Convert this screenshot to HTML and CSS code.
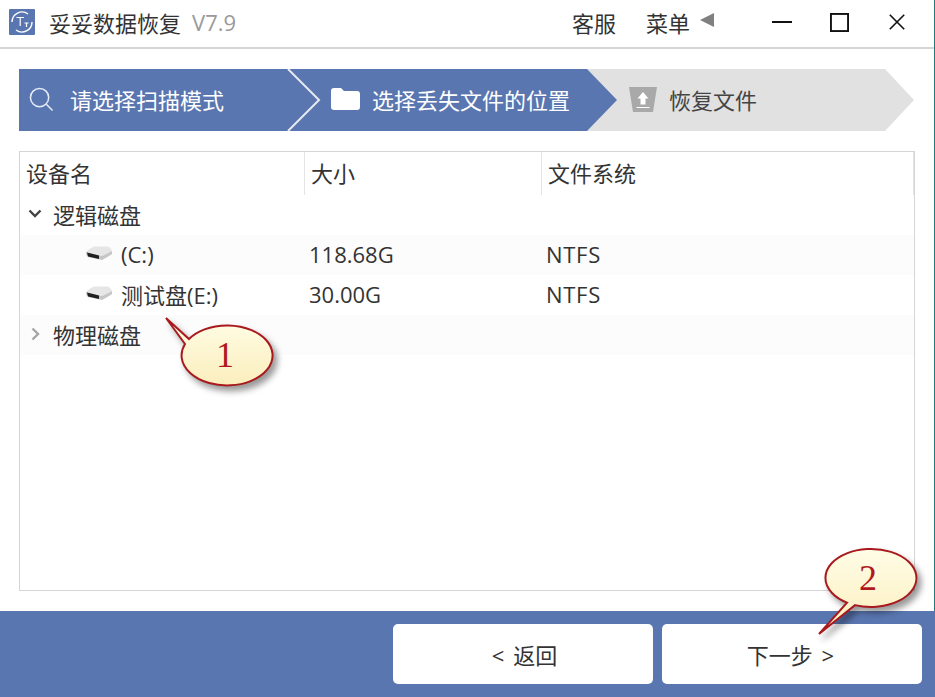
FILE: index.html
```html
<!DOCTYPE html>
<html lang="zh-CN">
<head>
    <meta charset="UTF-8">
    <title>妥妥数据恢复</title>
    <link rel="stylesheet" href="styles.css">
</head>
<body>
    <div class="window">
        <div class="titlebar">
            <svg class="app-logo" viewBox="0 0 26 26">
                <rect width="26" height="26" rx="1" fill="#5a76b0"/>
                <path d="M3 13 A10 10 0 0 1 19 5" fill="none" stroke="#fff" stroke-width="1.4"/>
                <path d="M23 13 A10 10 0 0 1 7 21" fill="none" stroke="#fff" stroke-width="1.4"/>
                <path d="M7.5 8.5 H15 M11.2 8.5 V17 M15.5 14 H19.5 M17.5 14 V18" fill="none" stroke="#fff" stroke-width="1.2"/>
            </svg>
            <span class="app-name">妥妥数据恢复</span>
            <span class="app-version">V7.9</span>
            <div class="title-actions">
                <span class="title-link">客服</span>
                <span class="title-link menu-link">菜单</span>
                <span class="menu-arrow"></span>
            </div>
            <div class="window-controls">
                <svg viewBox="0 0 20 20" class="control control-min"><path d="M0 10 H20" stroke="#111" stroke-width="2"/></svg>
                <svg viewBox="0 0 20 20" class="control control-max"><rect x="1" y="1" width="18" height="18" fill="none" stroke="#111" stroke-width="2"/></svg>
                <svg viewBox="0 0 20 20" class="control control-close"><path d="M2 2 L18 18 M18 2 L2 18" stroke="#111" stroke-width="1.8"/></svg>
            </div>
        </div>

        <div class="content">
            <div class="steps">
                <div class="step step-one">
                    <svg class="step-icon search-icon" viewBox="0 0 26 26">
                        <circle cx="11" cy="11" r="9.5" fill="none" stroke="#e4eaf5" stroke-width="1.6"/>
                        <path d="M18 18 L24.5 24.5" stroke="#e4eaf5" stroke-width="1.6"/>
                    </svg>
                    <span>请选择扫描模式</span>
                </div>
                <div class="step step-two">
                    <svg class="step-icon folder-icon" viewBox="0 0 29 22">
                        <path d="M0 3 Q0 0 3 0 H10 L13 3 H26 Q29 3 29 6 V19 Q29 22 26 22 H3 Q0 22 0 19 Z" fill="#fff"/>
                    </svg>
                    <span>选择丢失文件的位置</span>
                </div>
                <div class="step step-three">
                    <svg class="step-icon upload-icon" viewBox="0 0 28 25">
                        <path d="M0 0 H28 L24 25 H4 Z" fill="#a9a9a9"/>
                        <path d="M14 5 L19.5 11.5 H16.5 V17.5 H11.5 V11.5 H8.5 Z" fill="#fff"/>
                        <path d="M7.5 20.5 H20.5" stroke="#fff" stroke-width="1.2"/>
                    </svg>
                    <span>恢复文件</span>
                </div>
                <svg class="step-divider" viewBox="0 0 34 62"><path d="M1 0 L32 31 L1 62" fill="none" stroke="#e6eaf3" stroke-width="2"/></svg>
            </div>

            <div class="table">
                <div class="table-head">
                    <div class="col-name">设备名</div>
                    <div class="col-size">大小</div>
                    <div class="col-fs">文件系统</div>
                </div>
                <div class="row">
                    <div class="col-name group-cell">
                        <svg class="caret" viewBox="0 0 14 9"><path d="M1.5 1.5 L7 7 L12.5 1.5" fill="none" stroke="#444" stroke-width="2.4"/></svg>
                        逻辑磁盘
                    </div>
                </div>
                <div class="row row-shade">
                    <div class="col-name disk-cell">
                        <svg class="drive" viewBox="0 0 28 15">
                            <path d="M1 6 Q5 2 9 0.5 H23 Q26 1.5 27 5 L17 10 Z" fill="#e6e6e6"/>
                            <path d="M1 6 L17 10 L27 5 V8 Q22 11.5 17 14 L3 11 Q1 9.5 1 6 Z" fill="#c6c6c6"/>
                            <path d="M2 6.5 L14 9.5 V13 L3 10.5 Z" fill="#1f1f1f"/>
                        </svg>
                        (C:)
                    </div>
                    <div class="col-size">118.68G</div>
                    <div class="col-fs">NTFS</div>
                </div>
                <div class="row">
                    <div class="col-name disk-cell">
                        <svg class="drive" viewBox="0 0 28 15">
                            <path d="M1 6 Q5 2 9 0.5 H23 Q26 1.5 27 5 L17 10 Z" fill="#e6e6e6"/>
                            <path d="M1 6 L17 10 L27 5 V8 Q22 11.5 17 14 L3 11 Q1 9.5 1 6 Z" fill="#c6c6c6"/>
                            <path d="M2 6.5 L14 9.5 V13 L3 10.5 Z" fill="#1f1f1f"/>
                        </svg>
                        测试盘(E:)
                    </div>
                    <div class="col-size">30.00G</div>
                    <div class="col-fs">NTFS</div>
                </div>
                <div class="row row-shade">
                    <div class="col-name group-cell">
                        <svg class="caret caret-closed" viewBox="0 0 9 14"><path d="M1.5 1.5 L7 7 L1.5 12.5" fill="none" stroke="#a5a5a5" stroke-width="2.4"/></svg>
                        物理磁盘
                    </div>
                </div>
            </div>
        </div>

        <div class="footer">
            <button class="footer-btn back-btn">&lt; 返回</button>
            <button class="footer-btn next-btn">下一步 &gt;</button>
        </div>

        <div class="callout callout-one">
            <svg viewBox="0 0 125 85" width="125" height="85">
                <defs>
                    <linearGradient id="cream-a" x1="0" y1="0" x2="0" y2="1">
                        <stop offset="0" stop-color="#fffde6"/>
                        <stop offset="1" stop-color="#fbeebd"/>
                    </linearGradient>
                </defs>
                <path d="M6 6 L29 27 A45.5 30 0 1 1 25 32 Z" fill="url(#cream-a)" stroke="#a81a1e" stroke-width="2"/>
            </svg>
            <span class="callout-num">1</span>
        </div>
        <div class="callout callout-two">
            <svg viewBox="0 0 118 100" width="118" height="100">
                <defs>
                    <linearGradient id="cream-b" x1="0" y1="0" x2="0" y2="1">
                        <stop offset="0" stop-color="#fffde6"/>
                        <stop offset="1" stop-color="#fbeebd"/>
                    </linearGradient>
                </defs>
                <path d="M4 94 L32 62.6 A45.5 29 0 1 1 40 65.1 Z" fill="url(#cream-b)" stroke="#a81a1e" stroke-width="2"/>
            </svg>
            <span class="callout-num">2</span>
        </div>
    </div>
</body>
</html>
```

FILE: styles.css
```css
* {
    margin: 0;
    padding: 0;
    box-sizing: border-box;
}

html, body {
    overflow: hidden;
}

body {
    background-color: white;
    font-family: 'Open Sans', 'Noto Sans CJK SC', sans-serif;
    font-size: 22px;
    color: #333;
}

.window {
    position: relative;
    width: 935px;
    height: 697px;
    display: flex;
    flex-direction: column;
    border-right: 1px solid #1f7f7f;
}

/* title bar */
.titlebar {
    height: 49px;
    flex-shrink: 0;
    display: flex;
    align-items: center;
    padding: 0 28px 3px 9px;
    border-bottom: 2px solid #d4d4d4;
}

.app-logo {
    width: 26px;
    height: 26px;
    margin-right: 14px;
}

.app-name {
    color: #333;
}

.app-version {
    color: #9a9a9a;
    margin-left: 11px;
}

.title-actions {
    display: flex;
    align-items: center;
    margin-left: auto;
}

.menu-link {
    margin-left: 30px;
}

.menu-arrow {
    width: 0;
    height: 0;
    margin-left: 10px;
    margin-bottom: 4px;
    border-top: 7px solid transparent;
    border-bottom: 7px solid transparent;
    border-right: 14px solid #808080;
}

.window-controls {
    display: flex;
    align-items: center;
    margin-left: 58px;
    gap: 38px;
}

.control {
    display: block;
    width: 20px;
    height: 20px;
}

.control-max {
    width: 19px;
    height: 19px;
}

.control-close {
    width: 18px;
    height: 18px;
    margin-left: 1px;
}

/* steps and table */
.content {
    flex: 1;
    padding: 20px 19px 20px 19px;
    display: flex;
    flex-direction: column;
}

.steps {
    position: relative;
    display: flex;
    height: 62px;
    flex-shrink: 0;
}

.step {
    display: flex;
    align-items: center;
    height: 62px;
    padding-bottom: 2px;
    color: white;
    background-color: #5a76b0;
}

.step-one {
    width: 300px;
    padding-left: 10px;
    z-index: 3;
    clip-path: polygon(0 0, 268px 0, 100% 50%, 268px 100%, 0 100%);
}

.step-two {
    width: 330px;
    margin-left: -32px;
    padding-left: 44px;
    z-index: 2;
    clip-path: polygon(0 0, 300px 0, 100% 50%, 300px 100%, 0 100%);
}

.step-three {
    width: 327px;
    margin-left: -30px;
    padding-left: 42px;
    color: #444;
    background-color: #e1e1e1;
    clip-path: polygon(0 0, 298px 0, 100% 50%, 298px 100%, 0 100%);
}

.step-icon {
    flex-shrink: 0;
}

.search-icon {
    width: 25px;
    height: 25px;
    margin-right: 16px;
}

.folder-icon {
    width: 29px;
    height: 22px;
    margin-right: 12px;
}

.upload-icon {
    width: 28px;
    height: 25px;
    margin-right: 12px;
}

.step-divider {
    position: absolute;
    left: 268px;
    top: 0;
    width: 34px;
    height: 62px;
    z-index: 4;
}

.table {
    flex: 1;
    margin-top: 20px;
    border: 1px solid #d5d5d5;
}

.table-head, .row {
    display: grid;
    grid-template-columns: 285px 237px 1fr;
}

.table-head {
    height: 43px;
    align-items: stretch;
}

.table-head > div {
    display: flex;
    align-items: center;
    padding-left: 6px;
    padding-bottom: 4px;
    border-right: 1px solid #e4e4e4;
}

.row {
    height: 40px;
    padding-bottom: 3px;
    align-items: center;
}

.row-shade {
    background-color: #fcfcfc;
}

.row > div {
    display: flex;
    align-items: center;
    padding-left: 6px;
    white-space: nowrap;
}

.row .col-size, .row .col-fs {
    padding-left: 4px;
}

.row .col-fs {
    letter-spacing: 0.7px;
}

.row .group-cell {
    padding-left: 8px;
}

.caret {
    width: 14px;
    height: 9px;
    margin-right: 11px;
}

.caret-closed {
    width: 9px;
    height: 14px;
    margin-left: 3px;
    margin-right: 13px;
}

.row .disk-cell {
    padding-left: 65px;
}

.drive {
    width: 28px;
    height: 15px;
    margin-right: 8px;
}

/* footer */
.footer {
    height: 86px;
    flex-shrink: 0;
    display: flex;
    justify-content: flex-end;
    gap: 9px;
    padding: 13px 13px 0 0;
    background-color: #5a76b0;
    margin-right: -1px;
}

.footer-btn {
    width: 260px;
    height: 60px;
    background-color: white;
    color: #333;
    border: none;
    border-radius: 5px;
    font-family: inherit;
    font-size: 22px;
    word-spacing: 3px;
}

.back-btn {
    padding-left: 3px;
}

.next-btn {
    padding-right: 3px;
}

/* annotations over the window */
.callout {
    position: absolute;
    z-index: 10;
}

.callout svg {
    display: block;
    overflow: visible;
    filter: drop-shadow(4px 5px 3px rgba(0,0,0,0.4));
}

.callout-num {
    position: absolute;
    font-family: 'Liberation Serif', serif;
    font-size: 36px;
    line-height: 36px;
    color: #b01a1e;
}

.callout-one {
    left: 160px;
    top: 312px;
}

.callout-one .callout-num {
    left: 56px;
    top: 25px;
}

.callout-two {
    left: 815px;
    top: 540px;
}

.callout-two .callout-num {
    left: 44px;
    top: 20px;
}
```
